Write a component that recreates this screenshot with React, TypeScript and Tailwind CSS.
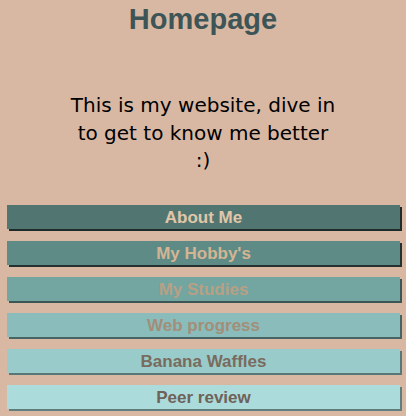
export default function App() {
  const items = [
    { label: "About Me", bg: "bg-[#517672]", fg: "text-[#e2c6a8]", sh: "shadow-[2px_2px_0_#1f2b29]" },
    { label: "My Hobby's", bg: "bg-[#5f8b87]", fg: "text-[#d3b594]", sh: "shadow-[2px_2px_0_#233230]" },
    { label: "My Studies", bg: "bg-[#73a5a1]", fg: "text-[#b8a085]", sh: "shadow-[2px_2px_0_#3c5655]" },
    { label: "Web progress", bg: "bg-[#89bcba]", fg: "text-[#a38e79]", sh: "shadow-[2px_2px_0_#466463]" },
    { label: "Banana Waffles", bg: "bg-[#99cbca]", fg: "text-[#796b5e]", sh: "shadow-[2px_2px_0_#587877]" },
    { label: "Peer review", bg: "bg-[#acdbdb]", fg: "text-[#6e6259]", sh: "shadow-[2px_2px_0_#5f7e7d]" },
  ];
  return (
    <div className="min-h-[416px] bg-[#d9b8a3] font-['Liberation_Sans',Arial,sans-serif]">
      <h1 className="pt-[1px] text-center text-[29px] font-bold leading-[36px] text-[#3d5556]">Homepage</h1>
      <p className="mx-auto mt-[55px] w-[270px] text-center font-['DejaVu_Sans',Verdana,sans-serif] text-[20px] leading-[27.5px] text-black">
        This is my website, dive in to get to know me better :)
      </p>
      <div className="mt-[30px] flex flex-col gap-[12px] pl-[7px] pr-[6px]">
        {items.map((it) => (
          <div
            key={it.label}
            className={`${it.bg} ${it.fg} ${it.sh} h-[24px] text-center text-[17px] font-bold leading-[25px]`}
          >
            {it.label}
          </div>
        ))}
      </div>
    </div>
  );
}
